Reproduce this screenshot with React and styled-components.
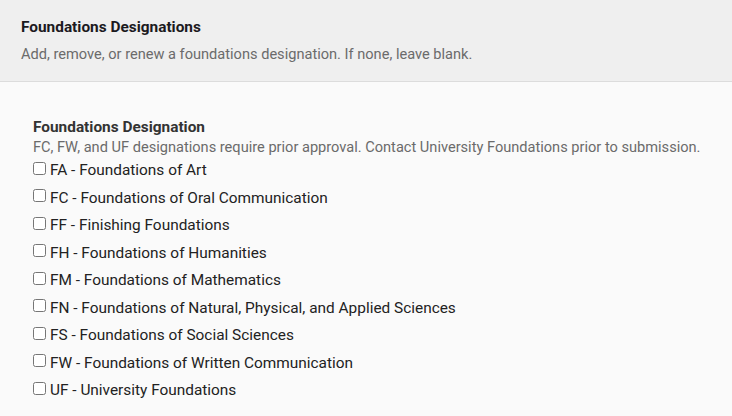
import React from "react";
import styled, { createGlobalStyle } from "styled-components";

const Global = createGlobalStyle`
  html, body { margin: 0; padding: 0; background: #fafafa; }
  body { font-family: Roboto, "Liberation Sans", Arial, sans-serif; }
`;

const Header = styled.header`
  background: #efefef;
  border-bottom: 1px solid #dcdcdc;
  padding: 17px 21px 17px;
`;

const HeaderTitle = styled.h2`
  margin: 0;
  font-size: 15.4px;
  line-height: 20px;
  font-weight: 700;
  color: #1c1a1e;
`;

const HeaderText = styled.p`
  margin: 7px 0 0;
  font-size: 14.6px;
  line-height: 20px;
  color: #6b6b6b;
`;

const Body = styled.section`
  padding: 35px 0 20px 33px;
`;

const FieldTitle = styled.h3`
  margin: 0;
  font-size: 15.4px;
  line-height: 20px;
  font-weight: 700;
  color: #333;
`;

const FieldHelp = styled.p`
  margin: 0 0 2px;
  font-size: 14.6px;
  line-height: 20px;
  color: #6b6b6b;
  white-space: nowrap;
`;

const List = styled.div`
  display: flex;
  flex-direction: column;
  gap: 5.5px;
`;

const Option = styled.label`
  display: flex;
  align-items: center;
  gap: 4px;
  font-size: 15.4px;
  line-height: 22px;
  color: #222;
`;

const Box = styled.input`
  margin: 0;
  width: 13px;
  height: 13px;
  position: relative;
  top: -2px;
`;

const options = [
  "FA - Foundations of Art",
  "FC - Foundations of Oral Communication",
  "FF - Finishing Foundations",
  "FH - Foundations of Humanities",
  "FM - Foundations of Mathematics",
  "FN - Foundations of Natural, Physical, and Applied Sciences",
  "FS - Foundations of Social Sciences",
  "FW - Foundations of Written Communication",
  "UF - University Foundations",
];

export default function App() {
  return (
    <>
      <Global />
      <Header>
        <HeaderTitle>Foundations Designations</HeaderTitle>
        <HeaderText>
          Add, remove, or renew a foundations designation. If none, leave blank.
        </HeaderText>
      </Header>
      <Body>
        <FieldTitle>Foundations Designation</FieldTitle>
        <FieldHelp>
          FC, FW, and UF designations require prior approval. Contact University
          Foundations prior to submission.
        </FieldHelp>
        <List>
          {options.map((o) => (
            <Option key={o}>
              <Box type="checkbox" />
              {o}
            </Option>
          ))}
        </List>
      </Body>
    </>
  );
}
